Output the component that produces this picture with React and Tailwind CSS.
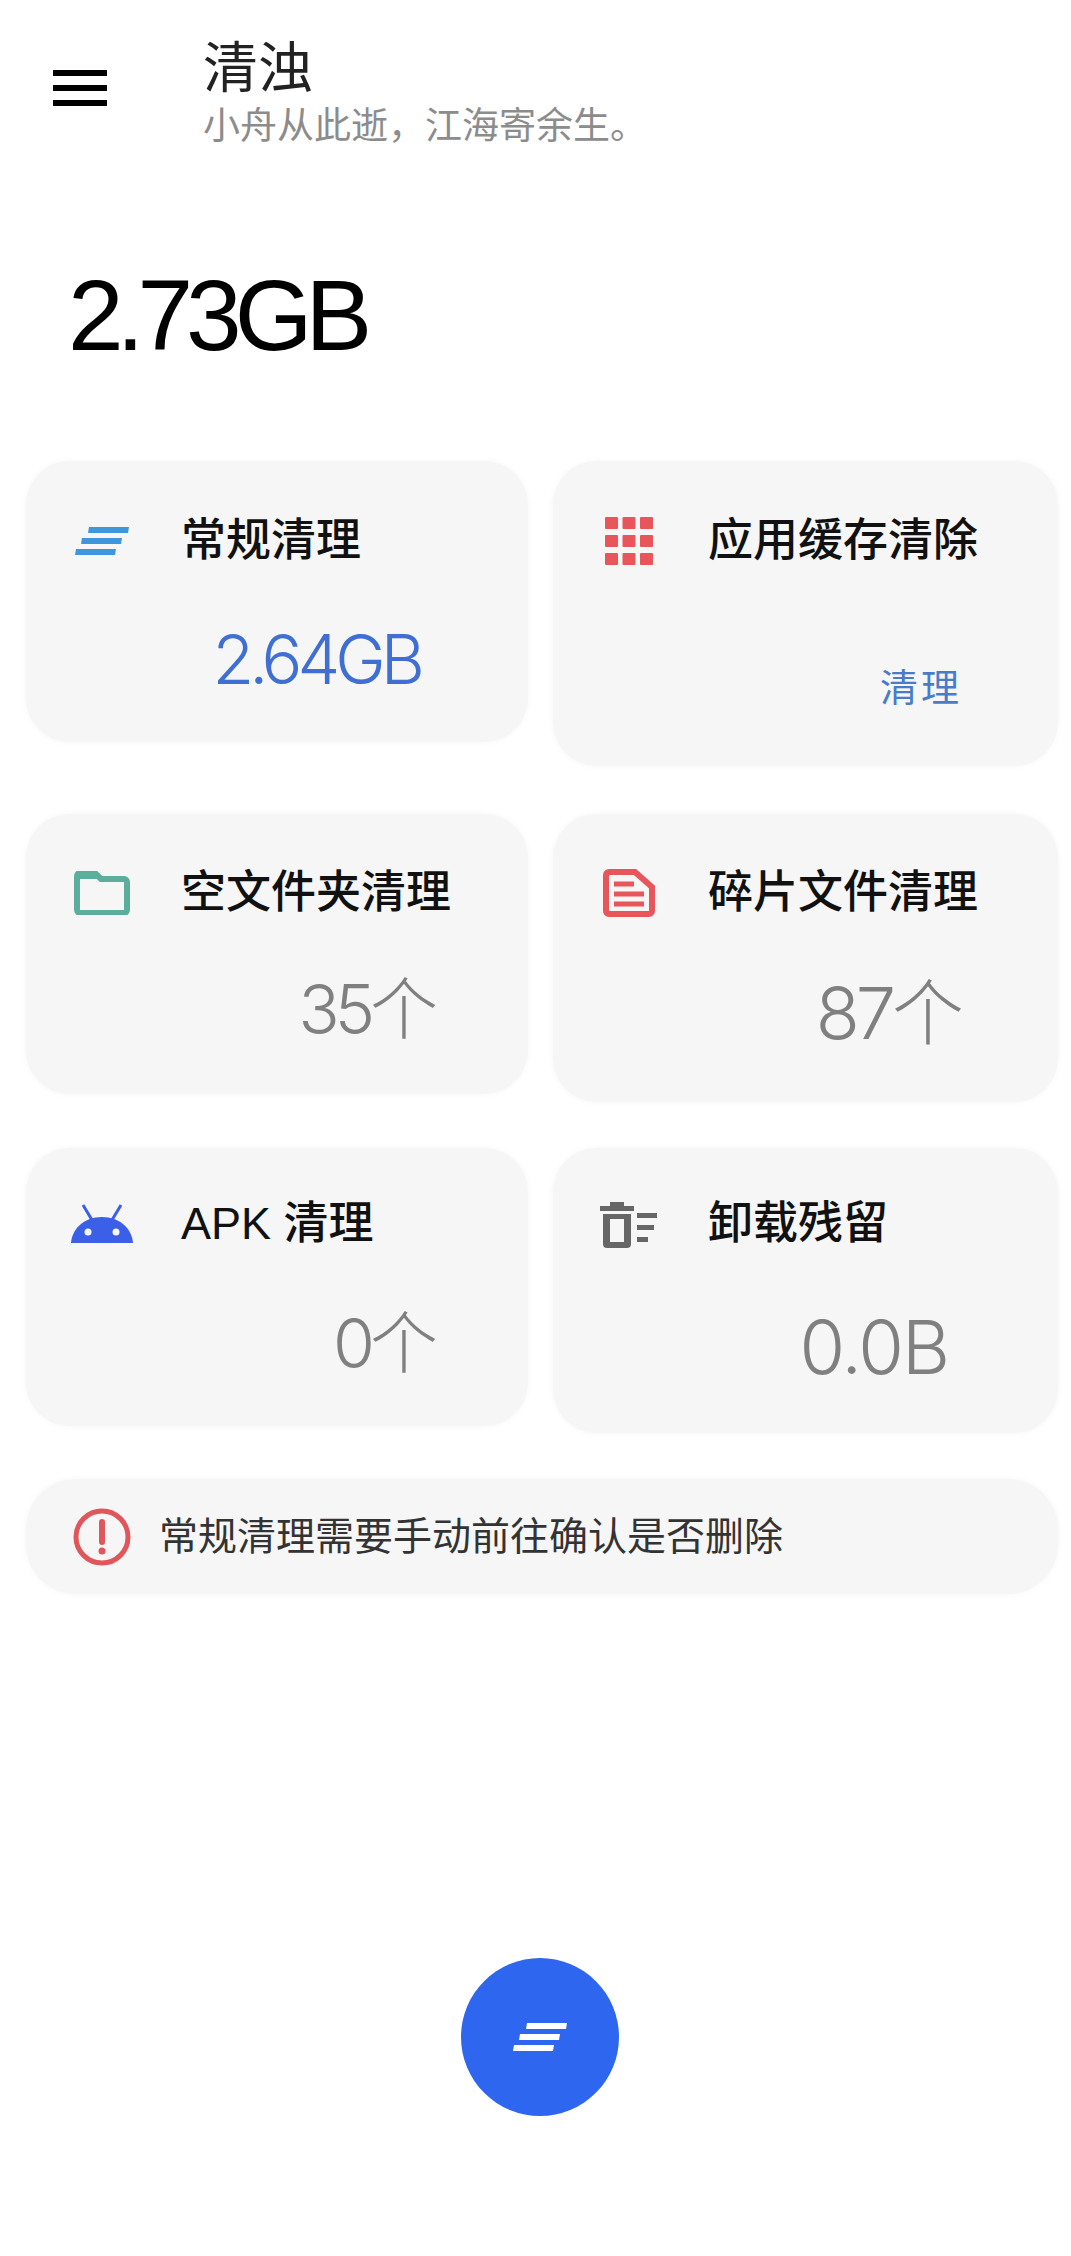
const sans = { fontFamily: '"Liberation Sans", "Noto Sans CJK SC", sans-serif' };

// small icons, drawn to match the screenshot
function LinesIcon({ fill, className }) {
  return (
    <svg viewBox="0 0 54 30" className={className} fill={fill}>
      <path d="M14 1h40l-1 6H13z" />
      <path d="M7 12h40l-1 6H6z" />
      <path d="M1 23h40l-1 6H0z" />
    </svg>
  );
}

function GridIcon() {
  return (
    <svg viewBox="0 0 48 48" className="w-[48px] h-[48px]" fill="#e8555a">
      {[0, 18, 36].map((y) =>
        [0, 17.5, 35].map((x) => <rect key={`${x}-${y}`} x={x} y={y} width="13" height="12" rx="1" />),
      )}
    </svg>
  );
}

function FolderIcon() {
  return (
    <svg viewBox="0 0 56 44" className="w-[56px] h-[44px]">
      <path d="M3 5a3 3 0 0 1 3-3h15l6 6h23a3 3 0 0 1 3 3v28a3 3 0 0 1-3 3H6a3 3 0 0 1-3-3z" fill="none" stroke="#5cae9c" strokeWidth="6" />
      <path d="M3 5a3 3 0 0 1 3-3h15l6 6H3z" fill="#5cae9c" />
    </svg>
  );
}

function DocIcon() {
  return (
    <svg viewBox="0 0 52 48" className="w-[52px] h-[48px]" fill="none" stroke="#e8555a">
      <path d="M6 3h26l17 15v24a3 3 0 0 1-3 3H6a3 3 0 0 1-3-3V6a3 3 0 0 1 3-3z" strokeWidth="6" />
      <path d="M11 15h20M11 25h30M11 35h30" strokeWidth="5" />
    </svg>
  );
}

function AndroidIcon() {
  return (
    <svg viewBox="0 0 64 40" className="w-[64px] h-[40px]">
      <path d="M1 39C2 25 14 13 32 13s30 12 31 26z" fill="#3c5fe8" />
      <path d="M13 1l9 15M51 1l-9 15" stroke="#3c5fe8" strokeWidth="3" />
      <circle cx="18" cy="28" r="3.5" fill="#f6f6f7" />
      <circle cx="46" cy="28" r="3.5" fill="#f6f6f7" />
    </svg>
  );
}

function TrashIcon() {
  return (
    <svg viewBox="0 0 58 48" className="w-[58px] h-[48px]" fill="#666">
      <path d="M0 6h34v5H0zM10 2h14v5H10z" />
      <path d="M3 14h28v30a4 4 0 0 1-4 4H7a4 4 0 0 1-4-4zm7 5v23h14V19z" fillRule="evenodd" />
      <path d="M37 13h20v5H37zM37 25h17v5H37zM37 37h11v5H37z" />
    </svg>
  );
}

function AlertIcon() {
  return (
    <svg viewBox="0 0 58 58" className="w-[58px] h-[58px] shrink-0" fill="none">
      <circle cx="29" cy="29" r="26" stroke="#e0565a" strokeWidth="5" />
      <path d="M29 14v20" stroke="#e0565a" strokeWidth="6" strokeLinecap="round" />
      <circle cx="29" cy="43" r="3.5" fill="#e0565a" />
    </svg>
  );
}

function Card({ icon, title, className, children }) {
  return (
    <div className={`bg-[#f6f6f7] rounded-[44px] shadow-[0_0_6px_#f6f6f7] ${className}`}>
      <div className="flex items-center h-[60px]">
        <div className="w-[82px] flex items-center justify-center ml-[35px] mr-[38px]">{icon}</div>
        <span className="text-[45px] leading-[60px] font-medium text-[#111]">{title}</span>
      </div>
      {children}
    </div>
  );
}

function Value({ children, className }) {
  return (
    <div className={`text-right font-['Inter','Noto_Sans_CJK_SC',sans-serif] font-light text-[#808080] leading-[76px] ${className}`}>
      {children}
    </div>
  );
}

export default function App() {
  return (
    <div className="bg-white min-h-[2256px] w-[1071px] overflow-hidden" style={sans}>
      {/* Header */}
      <div className="flex items-start pt-[38px]">
        <div className="ml-[53px] mt-[32px] w-[54px] flex flex-col gap-[9px]">
          <div className="h-[6px] bg-black" />
          <div className="h-[6px] bg-black" />
          <div className="h-[6px] bg-black" />
        </div>
        <div className="ml-[96px]">
          <div className="text-[55px] leading-[60px] text-[#222]">清浊</div>
          <div className="mt-[6px] text-[37px] leading-[46px] text-[#8c8c8c]">小舟从此逝，江海寄余生。</div>
        </div>
      </div>

      <div className="mt-[110px] ml-[68px] text-[100px] leading-[110px] tracking-[-7px] text-black">2.73GB</div>

      {/* Cards */}
      <div className="mt-[91px] ml-[26px] mr-[13px] grid grid-cols-[502px_505px] gap-x-[25px] items-start">
        <Card className="h-[281px] pt-[50px]" icon={<LinesIcon fill="#3f96dc" className="w-[54px] h-[30px]" />} title="常规清理">
          <Value className="mt-[50px] pr-[108px] !text-[#3f6fd2] text-[68px] tracking-[-5px]">2.64GB</Value>
        </Card>
        <Card className="h-[305px] pt-[50px]" icon={<GridIcon />} title="应用缓存清除">
          <div className="mt-[93px] pr-[96px] text-right text-[38px] leading-[48px] tracking-[3px] text-[#4a7bc8]">清理</div>
        </Card>

        <Card className="mt-[48px] h-[280px] pt-[49px]" icon={<FolderIcon />} title="空文件夹清理">
          <Value className="mt-[48px] pr-[95px] text-[68px] tracking-[-5px]">35个</Value>
        </Card>
        <Card className="mt-[48px] h-[288px] pt-[49px]" icon={<DocIcon />} title="碎片文件清理">
          <Value className="mt-[52px] pr-[98px] text-[72px] tracking-[-4px]">87个</Value>
        </Card>

        <Card className="mt-[46px] h-[278px] pt-[46px]" icon={<AndroidIcon />} title="APK 清理">
          <Value className="mt-[51px] pr-[95px] text-[68px] tracking-[-5px]">0个</Value>
        </Card>
        <Card className="mt-[46px] h-[285px] pt-[46px]" icon={<TrashIcon />} title="卸载残留">
          <Value className="mt-[55px] pr-[110px] text-[74px] tracking-[-2px]">0.0B</Value>
        </Card>
      </div>

      {/* Notice */}
      <div className="mt-[46px] ml-[26px] mr-[13px] h-[115px] rounded-[50px] bg-[#f6f6f7] shadow-[0_0_6px_#f6f6f7] flex items-center pl-[47px] gap-[28px]">
        <AlertIcon />
        <span className="text-[39px] leading-[50px] text-[#333]">常规清理需要手动前往确认是否删除</span>
      </div>

      {/* FAB */}
      <div className="mt-[364px] pl-[9px] flex justify-center">
        <div className="w-[158px] h-[158px] rounded-full bg-[#2f66f0] flex items-center justify-center">
          <LinesIcon fill="#fff" className="w-[54px] h-[30px]" />
        </div>
      </div>
    </div>
  );
}
